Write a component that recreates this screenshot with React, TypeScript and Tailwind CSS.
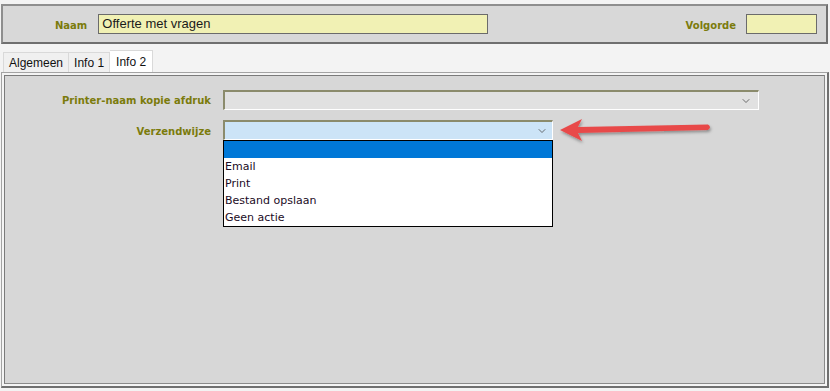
import { ChevronDown } from "lucide-react";

const label = "font-['DejaVu_Sans',sans-serif] text-[10px] font-bold text-[#7b7b0c]";
const options = ["Email", "Print", "Bestand opslaan", "Geen actie"];

export default function App() {
  return (
    <div className="relative h-[391px] w-[830px] overflow-hidden bg-[#f3f3f3] pt-[4px] font-['Liberation_Sans',sans-serif]">
      {/* header: naam + volgorde */}
      <div className="mx-[1px] flex h-[40px] w-[827px] items-center border-2 border-[#8e8e8e] border-r-[#6f6f6f] border-b-[#6f6f6f] bg-[#d8d8d8]">
        <span className={`${label} ml-[52px] mt-[2px]`}>Naam</span>
        <div className="ml-[11px] flex h-[20px] w-[390px] items-center border border-[#6b6b6b] bg-[#f1f1b4] pl-[3px] text-[13px] text-[#1a1a1a]">
          Offerte met vragen
        </div>
        <span className={`${label} ml-auto mt-[2px]`}>Volgorde</span>
        <div className="ml-[10px] mr-[9px] h-[20px] w-[71px] border border-[#6b6b6b] bg-[#f1f1b4]" />
      </div>

      {/* tabs */}
      <div className="ml-[3px] mt-[6px] flex h-[22px] items-end font-['Liberation_Sans',sans-serif] text-[12px] text-[#111]">
        <div className="flex h-[20px] items-center border border-b-0 border-[#d9d9d9] bg-[#f0f0f0] px-[5px]">Algemeen</div>
        <div className="flex h-[20px] items-center border border-b-0 border-l-0 border-[#d9d9d9] bg-[#f0f0f0] px-[5px]">Info 1</div>
        <div className="flex h-[22px] items-start border border-b-0 border-l-0 border-[#d9d9d9] bg-white px-[6px] pt-[2px]">Info 2</div>
      </div>

      {/* main panel */}
      <div className="ml-[1px] h-[316px] w-[828px] border border-[#a3a3a3] border-r-2 border-b-2 border-r-[#707070] border-b-[#707070] bg-[#f4f4f4] p-[2px]">
        <div className="h-full border border-[#7a7a7a] border-r-[#8a8a8a] border-b-[#8a8a8a] bg-[#d7d7d7] pt-[14px]">
          <div className="flex items-center">
            <span className={`${label} w-[206px] text-right`}>Printer-naam kopie afdruk</span>
            <div className="ml-[12px] flex h-[20px] w-[536px] items-center justify-end border-t-2 border-l-2 border-b border-r border-[#8b8b6c] border-b-white border-r-white bg-[#e1e1e1] pr-[6px]">
              <ChevronDown size={12} strokeWidth={1.5} className="text-[#444]" />
            </div>
          </div>
          <div className="mt-[10px] flex items-start">
            <span className={`${label} mt-[4px] w-[206px] text-right`}>Verzendwijze</span>
            <div className="ml-[12px] flex w-[330px] flex-col">
              <div className="flex h-[20px] items-center justify-end border-t-2 border-l-2 border-b border-r border-[#8b8b6c] border-b-white border-r-white bg-[#cce4f7] pr-[4px]">
                <ChevronDown size={12} strokeWidth={1.5} className="text-[#444]" />
              </div>
              <div className="border border-black bg-white font-['DejaVu_Sans',sans-serif] text-[11px] text-[#1b0b25]">
                <div className="h-[17px] bg-[#0078d7]" />
                {options.map((o) => (
                  <div key={o} className="flex h-[17px] items-center pl-[1px] pt-[2px]">
                    {o}
                  </div>
                ))}
              </div>
            </div>
          </div>
        </div>
      </div>

      {/* red annotation arrow */}
      <svg className="absolute left-[556px] top-[114px]" width="160" height="34" viewBox="0 0 160 34">
        <defs>
          <filter id="sh" x="-10%" y="-30%" width="120%" height="170%">
            <feDropShadow dx="1" dy="2" stdDeviation="1.5" floodColor="#000" floodOpacity="0.35" />
          </filter>
        </defs>
        <g filter="url(#sh)" fill="#e84a4a">
          <path d="M4 16 L26 5 L22 13 L152 10.5 Q156 13 152 16 L22 19 L26 27 Z" />
        </g>
      </svg>
    </div>
  );
}
